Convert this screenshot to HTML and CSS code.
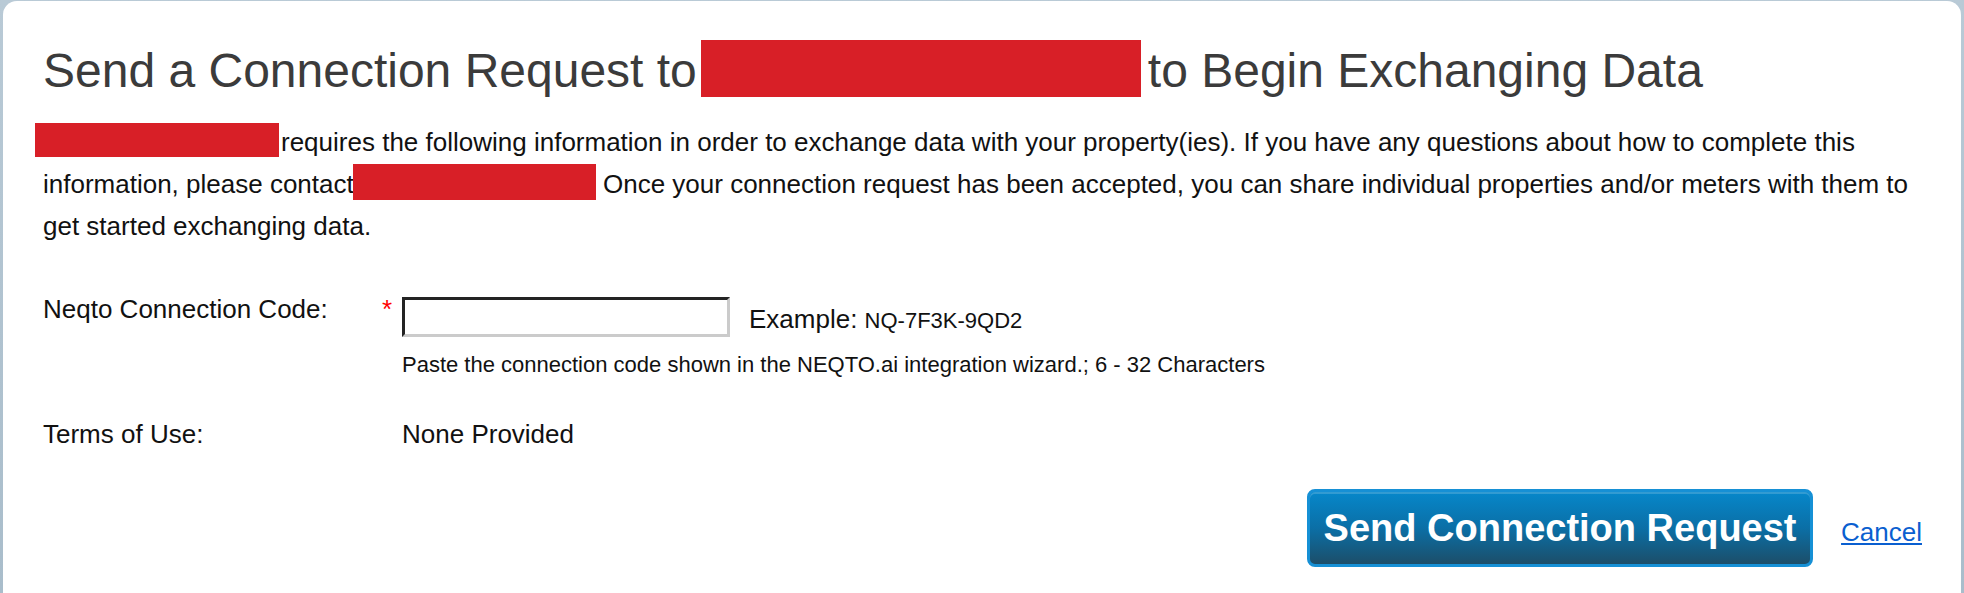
FILE: index.html
```html
<!DOCTYPE html>
<html lang="en">
<head>
<meta charset="utf-8">
<title>Send a Connection Request</title>
<link rel="stylesheet" href="styles.css">
</head>
<body>
<div class="card">
  <h1 class="title">Send a Connection Request to<span class="redact redact-title"></span>to Begin Exchanging Data</h1>
  <p class="intro"><span class="redact redact-p1"></span>requires the following information in order to exchange data with your property(ies). If you have any questions about how to complete this information, please contact<span class="redact redact-p2"></span> Once your connection request has been accepted, you can share individual properties and/or meters with them to get started exchanging data.</p>

  <div class="form">
    <div class="row row-code">
      <div class="label">Neqto Connection Code:</div>
      <div class="req">*</div>
      <div class="field">
        <div class="field-line">
          <input class="text-input" type="text" aria-label="Neqto Connection Code">
          <span class="example">Example: <span class="example-code">NQ-7F3K-9QD2</span></span>
        </div>
        <div class="hint">Paste the connection code shown in the NEQTO.ai integration wizard.; 6 - 32 Characters</div>
      </div>
    </div>
    <div class="row row-terms">
      <div class="label">Terms of Use:</div>
      <div class="req"></div>
      <div class="value">None Provided</div>
    </div>
  </div>

  <div class="actions">
    <button class="btn-primary" type="button">Send Connection Request</button>
    <a class="cancel" href="#">Cancel</a>
  </div>
</div>
</body>
</html>
```

FILE: styles.css
```css
html, body {
  margin: 0;
  padding: 0;
}

body {
  background: linear-gradient(#b9cad6, #a9bdcb);
  height: 593px;
  overflow: hidden;
  font-family: "Liberation Sans", Arial, sans-serif;
  color: #111;
}

.card {
  margin: 1px 3px 0 3px;
  height: 592px;
  box-sizing: border-box;
  background: #fff;
  border-radius: 14px 14px 0 0;
  padding: 39px 40px 0 40px;
}

.title {
  margin: 0;
  font-size: 48px;
  font-weight: normal;
  line-height: 55px;
  color: #3b3b3b;
  white-space: nowrap;
}

.redact {
  display: inline-block;
  background: #d81f27;
}

.redact-title {
  width: 440px;
  height: 57px;
  vertical-align: -10px;
  margin: 0 7px 0 4px;
}

.intro {
  margin: 23px 0 0 0;
  font-size: 26px;
  line-height: 42px;
  color: #111;
}

.redact-p1 {
  width: 244px;
  height: 34px;
  vertical-align: -6px;
  margin-left: -8px;
  margin-right: 2px;
}

.redact-p2 {
  width: 243px;
  height: 36px;
  vertical-align: -7px;
  margin-left: -1px;
}

.form {
  margin-top: 50px;
}

.row {
  display: grid;
  grid-template-columns: 339px 20px 1fr;
  align-items: start;
}

.label {
  font-size: 26px;
  line-height: 24px;
  color: #111;
}

.req {
  color: #f00;
  font-size: 26px;
  line-height: 24px;
}

.field-line {
  display: flex;
  align-items: flex-start;
}

.text-input {
  box-sizing: border-box;
  width: 328px;
  height: 40px;
  margin: 0;
  padding: 0 6px;
  border-style: solid;
  border-width: 3px;
  border-color: #232323 #cbcbcb #cbcbcb #232323;
  background: #fff;
  font-family: "Liberation Sans", Arial, sans-serif;
  font-size: 22px;
  outline: none;
}

.example {
  margin-left: 19px;
  margin-top: 9px;
  font-size: 26px;
  line-height: 26px;
  white-space: nowrap;
}

.example-code {
  font-size: 22px;
}

.hint {
  margin-top: 15px;
  font-size: 22px;
  line-height: 26px;
}

.row-terms {
  margin-top: 44px;
}

.value {
  font-size: 26px;
  line-height: 24px;
}

.actions {
  display: flex;
  justify-content: flex-end;
  align-items: baseline;
  gap: 28px;
  margin-top: 43px;
  margin-right: -1px;
}

.btn-primary {
  box-sizing: border-box;
  width: 506px;
  height: 78px;
  padding: 0;
  border: 3px solid #1690d5;
  border-radius: 8px;
  background: linear-gradient(#0687ca, #0b6fa6 50%, #1c4e69);
  box-shadow: inset 0 2px 0 rgba(255, 255, 255, 0.18);
  color: #fff;
  font-family: "Liberation Sans", Arial, sans-serif;
  font-size: 38px;
  font-weight: bold;
  line-height: 72px;
  cursor: pointer;
}

.cancel {
  font-size: 26px;
  color: #0a5fd0;
  text-decoration: underline;
}
```
